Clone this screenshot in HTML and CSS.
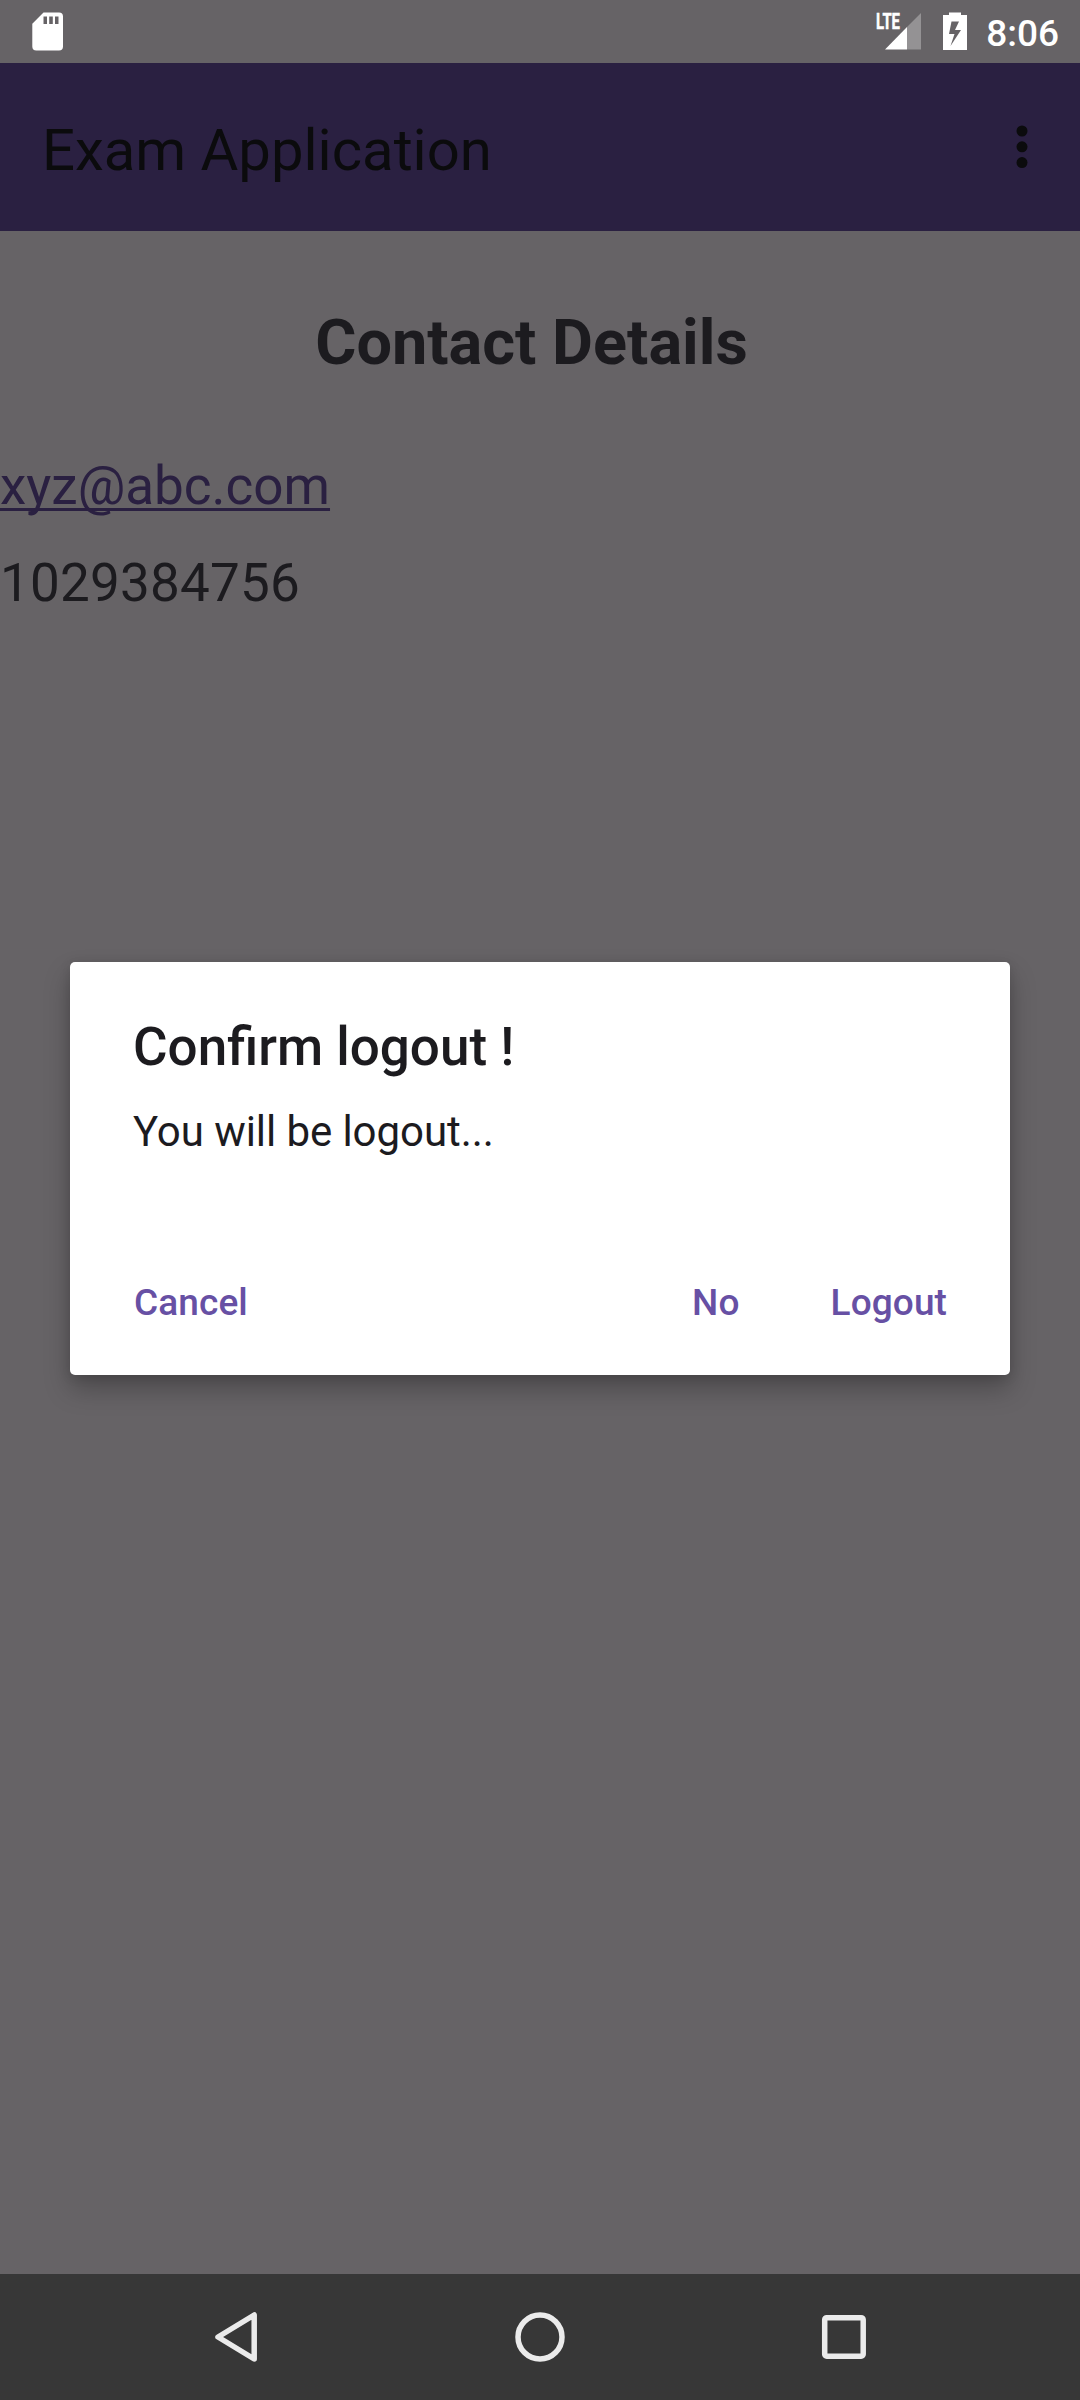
FILE: index.html
```html
<!DOCTYPE html>
<html lang="en">
<head>
<meta charset="utf-8">
<title>Exam Application</title>
<link rel="stylesheet" href="styles.css">
</head>
<body>
<div class="screen">
  <header class="status-bar">
    <svg class="sd-icon" width="33" height="40" viewBox="0 0 33 40"><path fill="#fff" fill-rule="evenodd" d="M12.500 0.500H28Q32 0.500 32 4.500V34.500Q32 38.500 28 38.500H5.300Q1.300 38.500 1.300 34.500V11.700ZM12.500 4.500V12H16V4.500ZM18.200 4.500V12H21.800V4.500ZM24 4.500V12H27.500V4.500Z"/></svg>
    <div class="status-right">
      <svg class="signal-icon" width="48" height="40" viewBox="0 0 48 40">
        <path fill="#fff" fill-opacity=".3" d="M31 15L45 1V37.500H31Z"/>
        <path fill="#fff" d="M9 37.500L31 15V37.500Z"/>
        <text class="lte" x="0" y="17" textLength="24" lengthAdjust="spacingAndGlyphs">LTE</text>
      </svg>
      <svg class="battery-icon" width="24" height="40" viewBox="0 0 24 40"><path fill="#fff" fill-rule="evenodd" d="M6 0.500H18V3H24V38H0V3H6ZM8.500 9.500L6 22H11.500L7.500 34L18 18H12L16 9.500Z"/></svg>
      <span class="clock">8:06</span>
    </div>
  </header>
  <div class="app-bar">
    <h1 class="app-title">Exam Application</h1>
    <svg width="12" height="44" viewBox="0 0 12 44" fill="#0b0b0d"><circle cx="6" cy="6" r="5.500"/><circle cx="6" cy="21.800" r="5.500"/><circle cx="6" cy="37.600" r="5.500"/></svg>
  </div>
  <main class="content">
    <h2 class="heading">Contact Details</h2>
    <a class="email">xyz@abc.com</a>
    <p class="phone">1029384756</p>
  </main>
  <nav class="nav-bar">
    <svg width="60" height="60" viewBox="0 0 60 60"><path d="M48.200 7V51L12 29Z"/></svg>
    <svg width="60" height="60" viewBox="0 0 60 60"><circle cx="30" cy="29" r="22"/></svg>
    <svg width="60" height="60" viewBox="0 0 60 60"><rect x="10.700" y="9.700" width="38.500" height="38.500" rx="2"/></svg>
  </nav>
  <section class="dialog">
    <h3 class="dialog-title">Confirm logout !</h3>
    <p class="dialog-text">You will be logout...</p>
    <div class="actions">
      <button class="action">Cancel</button>
      <button class="action action-no">No</button>
      <button class="action">Logout</button>
    </div>
  </section>
</div>
</body>
</html>
```
FILE: styles.css
```css
body { margin: 0; font-family: Roboto, sans-serif; }
h1, h2, h3, p { margin: 0; font-weight: 400; }
svg { display: block; overflow: visible; }
.screen {
  position: relative;
  display: flex;
  flex-direction: column;
  width: 1080px;
  height: 2400px;
  background: #666366;
  color: #1c1b1f;
  overflow: hidden;
}
.status-bar {
  display: flex;
  justify-content: space-between;
  align-items: flex-start;
  height: 51px;
  padding: 12px 21px 0 31px;
}
.status-right { display: flex; align-items: flex-start; }
.signal-icon { margin-right: 19px; }
.battery-icon { margin-right: 19px; }
.lte { font: 700 22px Roboto, sans-serif; fill: #fff; stroke: #fff; stroke-width: .5px; }
.clock { font-size: 37px; font-weight: 500; line-height: 43px; color: #fff; }
.app-bar {
  display: flex;
  justify-content: space-between;
  align-items: center;
  box-sizing: border-box;
  height: 168px;
  padding: 0 52px 0 42px;
  background: #2a2041;
}
.app-title { padding-top: 6px; font-size: 58px; line-height: 68px; color: #0b0b0d; }
.content { flex: 1; padding-top: 75px; }
.heading { padding-right: 17px; font-size: 63px; font-weight: 700; line-height: 74px; text-align: center; }
.email {
  display: block;
  margin-top: 75px;
  font-size: 53px;
  line-height: 62px;
  color: #2a2041;
  text-decoration: underline;
  text-decoration-thickness: 3px;
  text-underline-offset: 4px;
  text-decoration-skip-ink: none;
}
.phone { margin-top: 35px; font-size: 53px; line-height: 62px; letter-spacing: .2px; }
.nav-bar {
  display: flex;
  justify-content: center;
  gap: 244px;
  height: 92px;
  padding-top: 34px;
  background: #373737;
}
.nav-bar svg { fill: none; stroke: #ebebeb; stroke-width: 5.5; stroke-linejoin: round; }
.dialog {
  position: absolute;
  left: 70px;
  top: 962px;
  box-sizing: border-box;
  width: 940px;
  height: 413px;
  padding: 54px 63px 0;
  border-radius: 5px;
  background: #fff;
  box-shadow: 0 14px 26px rgba(0,0,0,.26), 0 2px 12px rgba(0,0,0,.12);
}
.dialog-title { font-size: 53px; font-weight: 500; line-height: 62px; }
.dialog-text { margin-top: 29px; font-size: 42px; line-height: 50px; letter-spacing: -.07px; }
.actions { display: flex; margin-top: 124px; padding-left: 1px; }
.action {
  padding: 0;
  border: 0;
  background: none;
  font: 500 37px/44px Roboto, sans-serif;
  letter-spacing: .1px;
  color: #6750a4;
}
.action-no { margin: 0 91px 0 auto; }
```
